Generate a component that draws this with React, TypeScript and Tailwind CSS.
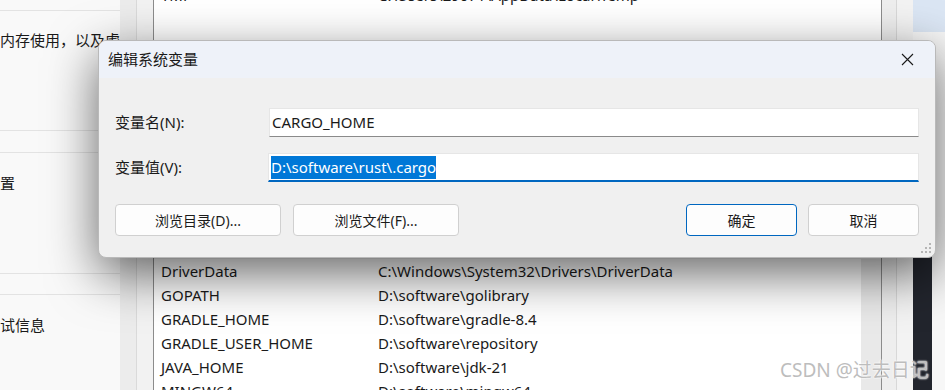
import React from "react";

const font = { fontFamily: '"Noto Sans", "Noto Sans CJK SC", sans-serif' };

const lowerRows: [string, string][] = [
  ["DriverData", "C:\\Windows\\System32\\Drivers\\DriverData"],
  ["GOPATH", "D:\\software\\golibrary"],
  ["GRADLE_HOME", "D:\\software\\gradle-8.4"],
  ["GRADLE_USER_HOME", "D:\\software\\repository"],
  ["JAVA_HOME", "D:\\software\\jdk-21"],
  ["MINGW64", "D:\\software\\mingw64"],
];

const Row = ({ name, value }: { name: string; value: string }) => (
  <div className="flex h-[24px] shrink-0 items-center pl-[7px] text-[15px] text-[#1a1a1a] whitespace-nowrap">
    <span className="w-[217px] shrink-0">{name}</span>
    <span>{value}</span>
  </div>
);

const Btn = ({ label, primary = false, w = "w-[166px]" }: { label: string; primary?: boolean; w?: string }) => (
  <button
    className={`${w} h-[32px] rounded-[4px] bg-[#fdfdfd] text-[14px] text-[#1b1b1b] border ${
      primary ? "border-[#0067c0]" : "border-[#d0d0d0]"
    }`}
  >
    {label}
  </button>
);

export default function App() {
  return (
    <div className="relative w-[945px] h-[390px] overflow-hidden bg-white" style={font}>
      {/* background windows */}
      <div className="flex h-full">
        {/* left settings panel */}
        <div className="w-[120px] shrink-0 flex flex-col bg-[#f9f9f9] overflow-hidden text-[15px] text-[#1a1a1a] whitespace-nowrap">
          <div className="h-[11px] shrink-0 border-b border-[#e3e3e3]" />
          <div className="h-[120px] shrink-0 border-b border-[#e3e3e3] pt-[18px] leading-[22px]">内存使用，以及虚拟内存</div>
          <div className="h-[22px] shrink-0 border-b border-[#e3e3e3]" />
          <div className="h-[121px] shrink-0 border-b border-[#e3e3e3] pt-[19px] leading-[22px]">置</div>
          <div className="h-[21px] shrink-0 border-b border-[#e3e3e3]" />
          <div className="flex-1 pt-[19px] leading-[22px]">试信息</div>
        </div>
        {/* frame strips */}
        <div className="w-[17px] shrink-0 bg-[#ececec] border-r border-[#dadada]" />
        <div className="w-[16px] shrink-0 bg-[#f2f2f2]" />
        {/* lists */}
        <div className="w-[729px] shrink-0 flex flex-col border-x border-[#8c8c8c] overflow-hidden">
          <div className="h-[40px] shrink-0 overflow-hidden bg-white">
            <div className="-mt-[17px]">
              <Row name="TMP" value="C:\Users\29071\AppData\Local\Temp" />
            </div>
          </div>
          <div className="h-[219px] shrink-0 bg-[#f0f0f0]" />
          <div className="flex flex-1 bg-white">
            <div className="flex-1 flex flex-col">
              {lowerRows.map(([n, v]) => (
                <Row key={n} name={n} value={v} />
              ))}
            </div>
            <div className="w-[20px] bg-[#e9e9e9]" />
          </div>
        </div>
        <div className="w-[15px] shrink-0 bg-[#eeeeee] border-r border-[#d8d8d8]" />
        <div className="w-[16px] shrink-0 bg-[#f3f3f3]" />
        <div className="flex-1 flex flex-col">
          <div className="h-[32px] shrink-0 bg-[#dbe6f4]" />
          <div className="flex flex-1">
            <div className="w-[19px] flex flex-col">
              <div className="h-[225px] shrink-0 bg-[#f8f8f8]" />
              <div className="flex-1 bg-[#22252d]" />
            </div>
            <div className="flex-1 bg-[#f7f7f7]" />
          </div>
        </div>
      </div>

      {/* dialog */}
      <div className="absolute left-[98px] top-[40px] w-[838px] h-[218px] rounded-[8px] border border-[#b9b9b9] bg-[#f0f0f0] overflow-hidden shadow-[0_16px_50px_rgba(0,0,0,0.6)] flex flex-col">
        <div className="h-[37px] shrink-0 bg-[#eef2f9] flex items-center justify-between pl-[9px] pr-[21px]">
          <span className="text-[15px] text-[#1a1a1a]">编辑系统变量</span>
          <svg width="13" height="13" viewBox="0 0 13 13">
            <path d="M1 1 L12 12 M12 1 L1 12" stroke="#1a1a1a" strokeWidth="1.1" />
          </svg>
        </div>
        <div className="relative flex-1 flex flex-col pl-[16px] pr-[16px] pt-[30px] text-[15px] text-[#1a1a1a]">
          <div className="flex items-center h-[29px]">
            <span className="w-[154px] shrink-0">变量名(N):</span>
            <div className="flex-1 h-full bg-white border border-[#e6e6e6] border-b-[#8a8a8a] flex items-center pl-[2px]">
              CARGO_HOME
            </div>
          </div>
          <div className="flex items-center h-[29px] mt-[16px]">
            <span className="w-[153px] shrink-0">变量值(V):</span>
            <div className="flex-1 h-full bg-white border border-[#e6e6e6] border-b-2 border-b-[#0067c0] flex items-center pl-[2px]">
              <span className="bg-[#0078d7] text-white leading-[23px]">D:\software\rust\.cargo</span>
            </div>
          </div>
          <div className="flex items-center mt-[22px]">
            <Btn label="浏览目录(D)..." />
            <div className="ml-[12px]">
              <Btn label="浏览文件(F)..." />
            </div>
            <div className="flex-1" />
            <Btn label="确定" primary w="w-[111px]" />
            <div className="ml-[11px]">
              <Btn label="取消" w="w-[111px]" />
            </div>
          </div>
          <svg className="absolute right-[3px] bottom-[3px]" width="11" height="11" viewBox="0 0 11 11">
            <g fill="#b5b5b5">
              <rect x="8" y="0" width="2" height="2" />
              <rect x="4" y="4" width="2" height="2" />
              <rect x="8" y="4" width="2" height="2" />
              <rect x="0" y="8" width="2" height="2" />
              <rect x="4" y="8" width="2" height="2" />
              <rect x="8" y="8" width="2" height="2" />
            </g>
          </svg>
        </div>
      </div>

      {/* watermark */}
      <div
        className="absolute left-[780px] top-[356px] text-[19px] text-[#bdbdbd] whitespace-nowrap"
        style={{ textShadow: "0 0 2px #fff, 0 0 2px #fff" }}
      >
        CSDN @过去日记
      </div>
    </div>
  );
}
